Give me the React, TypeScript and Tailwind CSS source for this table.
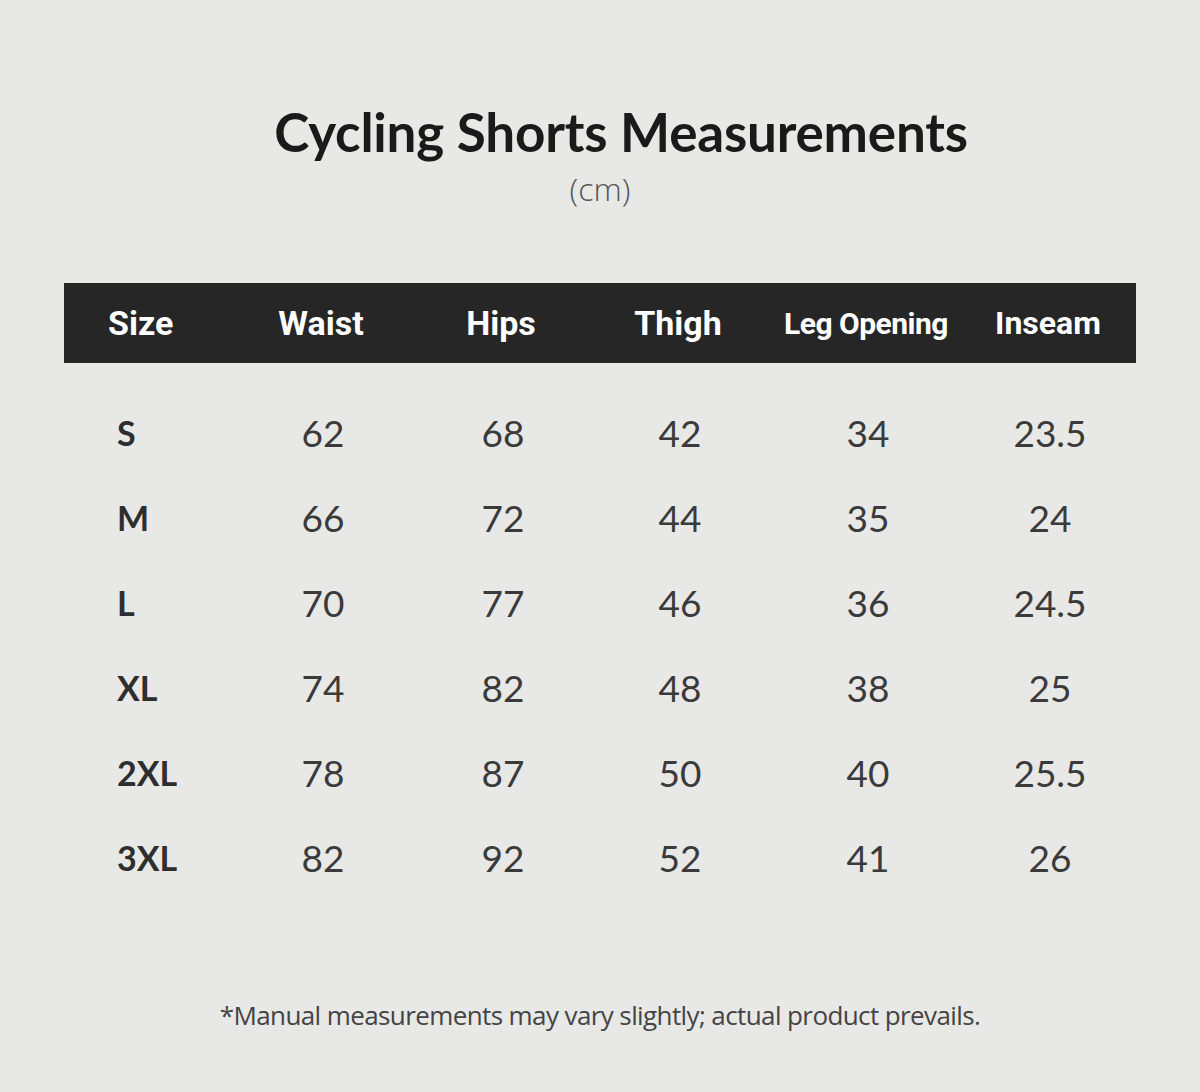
import React from "react";

type Row = { size: string; values: string[] };

const headers = ["Size", "Waist", "Hips", "Thigh", "Leg Opening", "Inseam"];

const rows: Row[] = [
  { size: "S", values: ["62", "68", "42", "34", "23.5"] },
  { size: "M", values: ["66", "72", "44", "35", "24"] },
  { size: "L", values: ["70", "77", "46", "36", "24.5"] },
  { size: "XL", values: ["74", "82", "48", "38", "25"] },
  { size: "2XL", values: ["78", "87", "50", "40", "25.5"] },
  { size: "3XL", values: ["82", "92", "52", "41", "26"] },
];

const cols = "grid grid-cols-[168px_178px_182px_172px_204px_168px]";

export default function App() {
  return (
    <div className="w-[1200px] h-[1092px] bg-[#e8e8e7] flex flex-col items-center text-[#2b2b2b] font-['Lato','Liberation_Sans',sans-serif]">
      <h1 className="mt-[100px] ml-[42px] text-[53px] leading-[64px] font-bold text-[#1a1a1a] tracking-[-0.2px]">
        Cycling Shorts Measurements
      </h1>
      <p className="mt-[6px] text-[32px] leading-[38px] text-[#555] font-light font-['Open_Sans',sans-serif]">(cm)</p>

      <div className="mt-[75px] w-[1072px]">
        <div className={`${cols} h-[80px] items-center bg-[#262626] text-white font-bold font-['Roboto','Liberation_Sans',sans-serif]`}>
          {headers.map((h, i) => (
            <div
              key={h}
              className={
                i === 0
                  ? "pl-[44px] text-[34px]"
                  : i === 4
                  ? "text-center text-[30px] tracking-[-0.5px]"
                  : i === 5
                  ? "text-center text-[32px] pr-[8px]"
                  : "text-center text-[34px]"
              }
            >
              {h}
            </div>
          ))}
        </div>

        <div className="mt-[27px]">
          {rows.map((r) => (
            <div key={r.size} className={`${cols} h-[85px] items-center text-[37px] text-[#3a3a3a]`}>
              <div className="pl-[53px] font-bold text-[34px] text-[#2e2e2e]">{r.size}</div>
              {r.values.map((v, i) => (
                <div key={i} className={i === 4 ? "text-center pr-[4px]" : "text-center pl-[4px]"}>
                  {v}
                </div>
              ))}
            </div>
          ))}
        </div>
      </div>

      <p className="mt-[98px] text-[26px] leading-[34px] text-[#444] tracking-[-0.6px] font-['Open_Sans',sans-serif]">
        *Manual measurements may vary slightly; actual product prevails.
      </p>
    </div>
  );
}
